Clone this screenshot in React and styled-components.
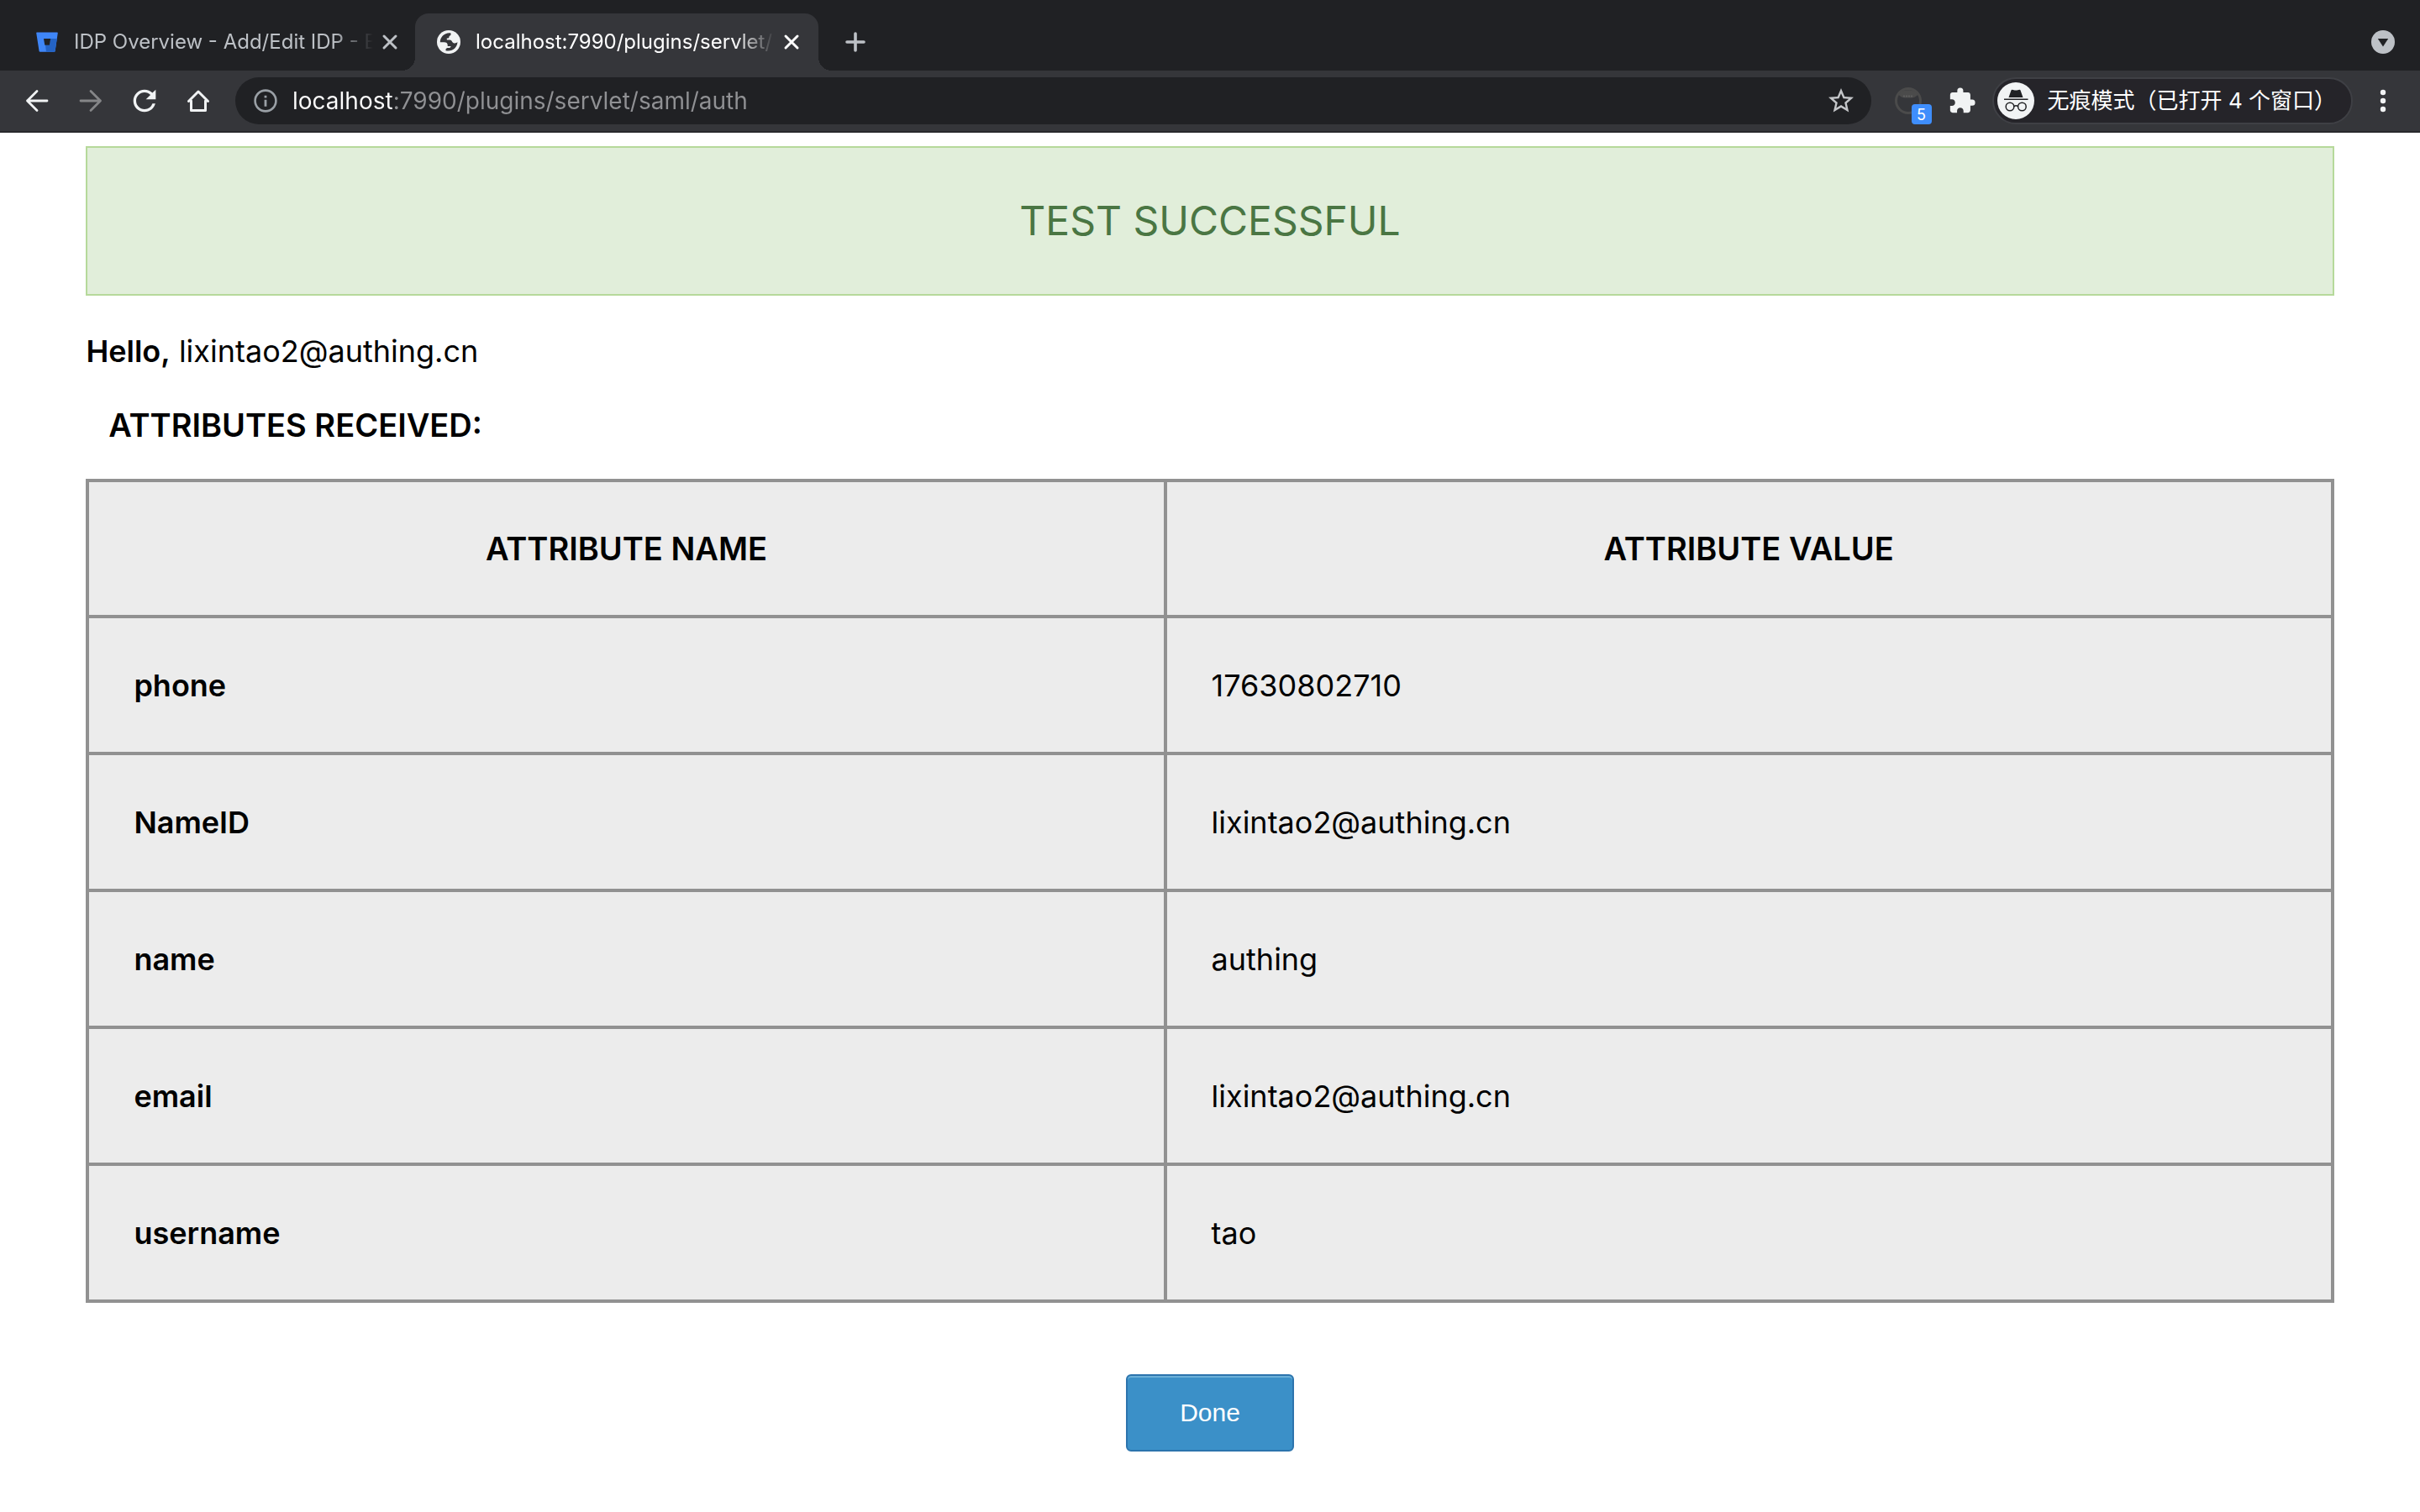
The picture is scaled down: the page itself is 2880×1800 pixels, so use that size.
import React from "react";
import styled, { createGlobalStyle } from "styled-components";
import { MdExtension, MdRefresh, MdStarBorder } from "react-icons/md";

const UI_FONT = 'Inter, "Noto Sans CJK SC", sans-serif';
const PAGE_FONT = 'Inter, "Liberation Sans", Arial, sans-serif';

const GlobalStyle = createGlobalStyle`
  *, *::before, *::after { box-sizing: border-box; }
  body { margin: 0; background: #fff; }
  button, input { font: inherit; }
`;

const BrowserHeader = styled.header`
  font-family: ${UI_FONT};
  background: #35363a;
  border-bottom: 2px solid #28292c;
`;

const TabStrip = styled.div`
  display: flex;
  align-items: flex-end;
  height: 84px;
  padding: 0 16px;
  background: #202124;
`;

const Tab = styled.div`
  position: relative;
  display: flex;
  align-items: center;
  flex: 0 1 ${(p) => (p.$active ? 480 : 478)}px;
  min-width: 0;
  height: 68px;
  padding: 0 ${(p) => (p.$active ? 20 : 18)}px 0 26px;
  border-radius: 16px 16px 0 0;
  background: ${(p) => (p.$active ? "#35363a" : "transparent")};
  color: ${(p) => (p.$active ? "#fff" : "#bdc1c6")};

  &::before,
  &::after {
    content: "";
    display: ${(p) => (p.$active ? "block" : "none")};
    position: absolute;
    bottom: 0;
    width: 16px;
    height: 16px;
  }
  &::before {
    right: 100%;
    background: radial-gradient(circle at 0 0, transparent 16px, #35363a 16px);
  }
  &::after {
    left: 100%;
    background: radial-gradient(circle at 100% 0, transparent 16px, #35363a 16px);
  }
`;

const TabTitle = styled.span`
  flex: 1;
  min-width: 0;
  margin: 0 8px 0 18px;
  overflow: hidden;
  white-space: nowrap;
  font-size: 24px;
  line-height: 32px;
  mask-image: linear-gradient(to left, transparent, #000 48px);
`;

const IconButton = styled.button`
  display: flex;
  align-items: center;
  justify-content: center;
  flex: none;
  width: ${(p) => p.$width || 64}px;
  height: ${(p) => p.$height || 56}px;
  padding: 0;
  border: 0;
  background: none;
  color: ${(p) => p.$color || "#f1f3f4"};
`;

const NewTabButton = styled(IconButton)`
  margin-left: 16px;
`;

const TabSearchButton = styled(IconButton)`
  margin-left: auto;
`;

const Toolbar = styled.div`
  display: flex;
  align-items: center;
  height: 72px;
  padding: 0 16px 0 12px;
`;

const Omnibox = styled.div`
  display: flex;
  align-items: center;
  flex: 1;
  min-width: 0;
  height: 56px;
  margin: 0 12px;
  padding: 0 4px 0 22px;
  border-radius: 28px;
  background: #202124;
`;

const UrlInput = styled.input`
  flex: 1;
  min-width: 0;
  margin-left: 18px;
  padding: 0;
  border: 0;
  outline: 0;
  background: linear-gradient(to right, #fff 119px, #909194 119px);
  background-clip: text;
  color: transparent;
  font-size: 28px;
  line-height: 40px;
`;

const ExtensionButton = styled(IconButton)`
  position: relative;
`;

const Badge = styled.span`
  position: absolute;
  right: 4px;
  bottom: 0;
  width: 24px;
  height: 24px;
  border-radius: 4px;
  background: #3f8efc;
  color: #fff;
  font-size: 18px;
  line-height: 26px;
  text-align: center;
`;

const IncognitoChip = styled.button`
  display: flex;
  align-items: center;
  flex: none;
  gap: 16px;
  height: 56px;
  margin: 0 8px 0 4px;
  padding: 0 18px 0 4px;
  border: 2px solid #3f4045;
  border-radius: 28px;
  background: #252429;
  color: #fff;
  font-size: 26px;
  line-height: 40px;
  white-space: nowrap;
`;

const Page = styled.main`
  margin: 16px;
  padding: 0 3%;
  background: #fff;
  color: #000;
  font-family: ${PAGE_FONT};
`;

const Banner = styled.div`
  padding: 60px;
  border: 2px solid #b6d99a;
  background: #e1eeda;
  color: #4a7643;
  font-size: 48px;
  line-height: 54px;
  text-align: center;
`;

const Greeting = styled.p`
  margin: 44px 0 0;
  font-size: 36px;
  line-height: 44px;
`;

const Strong = styled.b`
  font-weight: 600;
`;

const SectionTitle = styled.p`
  margin: 44px 0 0;
  padding-left: 1%;
  font-size: 38px;
  font-weight: 600;
  line-height: 44px;
`;

const AttributeTable = styled.table`
  width: 100%;
  margin-top: 42px;
  border-collapse: collapse;
  table-layout: fixed;
  background: #ececec;
`;

const NameColumn = styled.col`
  width: 48%;
`;

const Cell = styled.td`
  height: ${(p) => (p.scope === "col" ? 162 : 163)}px;
  padding: 0 53px;
  border: 4px solid #919191;
  font-size: ${(p) => (p.scope === "col" ? 38 : 36)}px;
  font-weight: ${(p) => (p.scope ? 600 : 400)};
  line-height: 44px;
  text-align: ${(p) => (p.scope === "col" ? "center" : "left")};
`;

const Actions = styled.div`
  display: flex;
  justify-content: center;
  margin-top: 85px;
`;

const DoneButton = styled.button`
  width: 200px;
  height: 92px;
  padding: 0;
  border: 2px solid #2c74ad;
  border-radius: 6px;
  background: #3b90c8;
  box-shadow: inset 0 2px 0 #6bb0d9;
  color: #fff;
  font-family: "Liberation Sans", Arial, sans-serif;
  font-size: 30px;
  line-height: 36px;
`;

const BucketIcon = () => (
  <svg width="28" height="28" viewBox="0 0 28 28" aria-hidden="true">
    <path d="M2 2.4h24a.8.8 0 0 1 .8.9L23.6 25a1 1 0 0 1-1 .8H5.600a1 1 0 0 1-1-.8L1.200 3.300a.8.8 0 0 1 .8-.9z" fill="#3f86f7" />
    <path d="M18 10h7.700l-2.200 15a1 1 0 0 1-1 .8H13l-1-8h5z" fill="#2463c4" />
    <path d="M10 10h8.200l-1.300 7.800h-5.600z" fill="#202124" />
  </svg>
);

const GlobeIcon = () => (
  <svg width="28" height="28" viewBox="0 0 28 28" aria-hidden="true">
    <circle cx="14" cy="14" r="14" fill="#f1f3f4" />
    <path
      d="M16.500 3.500C9.500 2.400 3.800 8 3.800 14.300H8.500c2.600 0 4.200 1.200 4.200 3.300v1.400h3.800c0 1.400-1 2-2.600 2-2 0-3.400.4-3.400 2v1.200C18 26 24.500 20.500 24.400 14c-1.500 1.500-3 1.600-4.600 1.200-2.300-.6-1.600-3.600-4.600-3.600h-3.400V9.600c2.200 0 2.600-.4 2.600-1.700 0-1.300 2.100-1.200 2.100-2.600z"
      fill="#35363a"
    />
  </svg>
);

const CloseIcon = () => (
  <svg width="20" height="20" viewBox="0 0 20 20" fill="none" stroke="currentColor" strokeWidth="3" strokeLinecap="round" aria-hidden="true">
    <path d="M3 3l14 14M17 3L3 17" />
  </svg>
);

const PlusIcon = () => (
  <svg width="24" height="24" viewBox="0 0 24 24" fill="none" stroke="currentColor" strokeWidth="3.600" strokeLinecap="round" aria-hidden="true">
    <path d="M12 2v20M2 12h20" />
  </svg>
);

const TabSearchIcon = () => (
  <svg width="28" height="28" viewBox="0 0 28 28" aria-hidden="true">
    <circle cx="14" cy="14" r="14" fill="#bdc1c6" />
    <path d="M7.800 10h12.400L14 19.400z" fill="#202124" />
  </svg>
);

const ArrowIcon = ({ forward }) => (
  <svg width="28" height="28" viewBox="0 0 28 28" fill="none" stroke="currentColor" strokeWidth="2.800" strokeLinecap="round" strokeLinejoin="round" aria-hidden="true">
    <path d={forward ? "M2 14h23.500M14 2.500L25.500 14 14 25.500" : "M26 14H2.500M14 2.500L2.500 14 14 25.500"} />
  </svg>
);

const HomeIcon = () => (
  <svg width="28" height="28" viewBox="0 0 28 28" fill="none" stroke="currentColor" strokeWidth="3" strokeLinejoin="round" strokeLinecap="round" aria-hidden="true">
    <path d="M2.500 14.500L14 3l11.500 11.500M5.500 14v11.500h17V14" />
  </svg>
);

const InfoIcon = () => (
  <svg width="28" height="28" viewBox="0 0 28 28" aria-hidden="true">
    <circle cx="14" cy="14" r="12.400" fill="none" stroke="#9aa0a6" strokeWidth="2.600" />
    <path d="M12.600 7.800h2.800v2.800h-2.800zM12.600 12.800h2.800v8h-2.800z" fill="#9aa0a6" />
  </svg>
);

const ShieldIcon = () => (
  <svg width="32" height="32" viewBox="0 0 32 32" fill="none" aria-hidden="true">
    <circle cx="16" cy="16" r="14.500" stroke="#4b4b4b" strokeWidth="3" />
    <path d="M4 8.500C9 1.500 23 1.500 28 8.500l-3.600 2.700c-1 1.800-15.800 1.800-16.800 0z" fill="#4b4b4b" />
    <path d="M10 10.500h12" stroke="#5d5d5d" strokeWidth="2" strokeDasharray="2 1" />
  </svg>
);

const IncognitoIcon = () => (
  <svg width="44" height="44" viewBox="0 0 44 44" aria-hidden="true">
    <circle cx="22" cy="22" r="22" fill="#f1f3f4" />
    <path d="M17.500 8.800c1.800 0 2.600.8 4.500.8s2.700-.8 4.500-.8c.6 0 .9.4 1.100.9L30.500 18h-17l2.900-8.300c.2-.5.5-.9 1.100-.9z" fill="#202124" />
    <path d="M8 19.500h28.500V21H8z" fill="#202124" />
    <g fill="none" stroke="#202124" strokeWidth="1.500">
      <circle cx="15" cy="29" r="4.800" />
      <circle cx="29.400" cy="29" r="4.800" />
      <path d="M19.800 28.600c1.300-1 3.500-1 4.800 0" />
    </g>
  </svg>
);

const MenuIcon = () => (
  <svg width="28" height="28" viewBox="0 0 28 28" fill="currentColor" aria-hidden="true">
    <circle cx="14" cy="4" r="3.200" />
    <circle cx="14" cy="14" r="3.200" />
    <circle cx="14" cy="24" r="3.200" />
  </svg>
);

const attributes = [
  { name: "phone", value: "17630802710" },
  { name: "NameID", value: "lixintao2@authing.cn" },
  { name: "name", value: "authing" },
  { name: "email", value: "lixintao2@authing.cn" },
  { name: "username", value: "tao" },
];

export default function App() {
  return (
    <>
      <GlobalStyle />
      <BrowserHeader>
        <TabStrip>
          <Tab>
            <BucketIcon />
            <TabTitle>IDP Overview - Add/Edit IDP - B</TabTitle>
            <IconButton $width={24} $height={24} $color="#bdc1c6" aria-label="Close tab">
              <CloseIcon />
            </IconButton>
          </Tab>
          <Tab $active>
            <GlobeIcon />
            <TabTitle>localhost:7990/plugins/servlet/</TabTitle>
            <IconButton $width={24} $height={24} $color="#fff" aria-label="Close tab">
              <CloseIcon />
            </IconButton>
          </Tab>
          <NewTabButton $width={56} $height={68} $color="#bdc1c6" aria-label="New tab">
            <PlusIcon />
          </NewTabButton>
          <TabSearchButton $width={56} $height={68} aria-label="Search tabs">
            <TabSearchIcon />
          </TabSearchButton>
        </TabStrip>
        <Toolbar>
          <IconButton aria-label="Back">
            <ArrowIcon />
          </IconButton>
          <IconButton $color="#858688" aria-label="Forward">
            <ArrowIcon forward />
          </IconButton>
          <IconButton aria-label="Reload">
            <MdRefresh size={40} />
          </IconButton>
          <IconButton aria-label="Home">
            <HomeIcon />
          </IconButton>
          <Omnibox>
            <InfoIcon />
            <UrlInput aria-label="Address" defaultValue="localhost:7990/plugins/servlet/saml/auth" />
            <IconButton $color="#c4c6c9" aria-label="Bookmark this page">
              <MdStarBorder size={36} />
            </IconButton>
          </Omnibox>
          <ExtensionButton aria-label="Extension">
            <ShieldIcon />
            <Badge>5</Badge>
          </ExtensionButton>
          <IconButton aria-label="Extensions">
            <MdExtension size={34} />
          </IconButton>
          <IncognitoChip>
            <IncognitoIcon />
            无痕模式（已打开 4 个窗口）
          </IncognitoChip>
          <IconButton $width={56} aria-label="Menu">
            <MenuIcon />
          </IconButton>
        </Toolbar>
      </BrowserHeader>
      <Page>
        <Banner>TEST SUCCESSFUL</Banner>
        <Greeting>
          <Strong>Hello,</Strong> lixintao2@authing.cn
        </Greeting>
        <SectionTitle>ATTRIBUTES RECEIVED:</SectionTitle>
        <AttributeTable>
          <colgroup>
            <NameColumn />
            <col />
          </colgroup>
          <thead>
            <tr>
              <Cell as="th" scope="col">ATTRIBUTE NAME</Cell>
              <Cell as="th" scope="col">ATTRIBUTE VALUE</Cell>
            </tr>
          </thead>
          <tbody>
            {attributes.map((item) => (
              <tr key={item.name}>
                <Cell as="th" scope="row">{item.name}</Cell>
                <Cell>{item.value}</Cell>
              </tr>
            ))}
          </tbody>
        </AttributeTable>
        <Actions>
          <DoneButton type="button">Done</DoneButton>
        </Actions>
      </Page>
    </>
  );
}
